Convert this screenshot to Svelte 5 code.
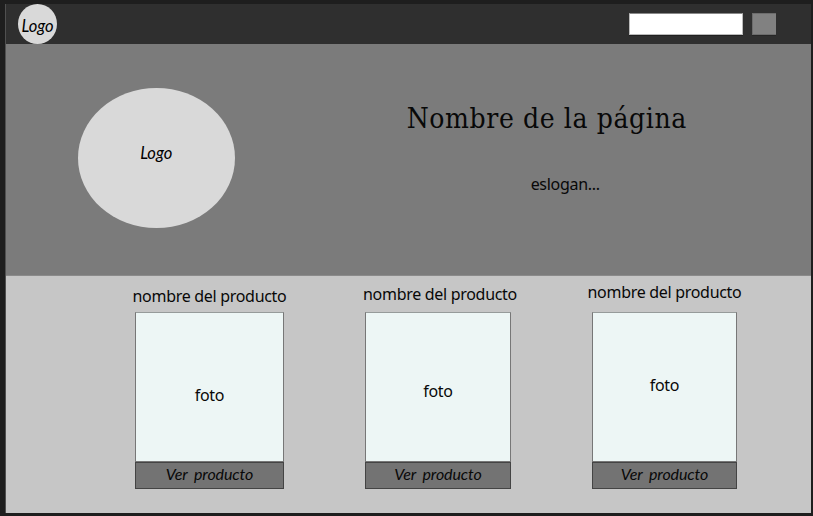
<script>
  const products = [
    { column: 1, width: 149, nameTop: 9, photoTop: 71 },
    { column: 2, width: 146, nameTop: 7, photoTop: 67 },
    { column: 3, width: 145, nameTop: 5, photoTop: 61 },
  ];
</script>

<div class="canvas">
  <div class="page">
    <header>
      <div class="badge"><span>Logo</span></div>
      <input type="text" aria-label="Buscar" />
      <button class="search" aria-label="Buscar"></button>
    </header>

    <section class="hero">
      <div class="logo"><span>Logo</span></div>
      <div class="intro">
        <h1>Nombre de la página</h1>
        <p>eslogan...</p>
      </div>
    </section>

    <main>
      {#each products as product (product.column)}
        <article style="width: {product.width}px">
          <h2 style="padding-top: {product.nameTop}px">nombre del producto</h2>
          <div class="photo" style="padding-top: {product.photoTop}px">foto</div>
          <button class="view"><span>Ver producto</span></button>
        </article>
      {/each}
    </main>
  </div>
</div>

<style>
  :global(body) {
    margin: 0;
    background: #1e1e1e;
  }

  .canvas {
    box-sizing: border-box;
    width: 813px;
    height: 516px;
    padding: 4px 2px 3px 5px;
    overflow: hidden;
    background: #1e1e1e;
    color: #080808;
    font: 16px/22px "Noto Sans", sans-serif;
    letter-spacing: -0.3px;
  }

  .page {
    box-sizing: border-box;
    height: 509px;
    border-left: 1px solid #505050;
    background: #c6c6c6;
  }

  header {
    display: flex;
    box-sizing: border-box;
    height: 40px;
    padding-left: 12px;
    background: #2f2f2f;
  }

  .badge,
  .logo {
    box-sizing: border-box;
    border-radius: 50%;
    background: #d9d9d9;
    text-align: center;
    font-family: Lato, sans-serif;
    font-style: italic;
    font-size: 16.5px;
    letter-spacing: 0;
    color: #000;
  }

  .badge {
    width: 39px;
    height: 40px;
    padding-top: 11px;
  }

  input {
    box-sizing: border-box;
    width: 114px;
    height: 22px;
    margin: 9px 0 0 572px;
    padding: 0;
    border: 1px solid #bbb;
    border-top-color: #888;
    border-radius: 0;
    background: #fff;
    box-shadow: 0 1px #202020;
  }

  .search {
    width: 24px;
    height: 22px;
    margin: 9px 0 0 9px;
    padding: 0;
    border: 1px solid #6c6c6c;
    border-right: 0;
    background: #818181;
    box-shadow: 0 1px #262626;
  }

  .hero {
    display: flex;
    height: 231px;
    background: #7b7b7b;
    border-bottom: 1px solid #8a8a8a;
  }

  .logo {
    flex: none;
    width: 157px;
    height: 140px;
    margin: 44.4px 0 0 71.7px;
    padding-top: 53.6px;
  }

  .intro {
    margin-left: 172px;
  }

  h1 {
    margin: 57px 0 0;
    font: 28px/36px "DejaVu Serif Condensed", "DejaVu Serif", serif;
    font-stretch: condensed;
    letter-spacing: 0.6px;
    white-space: nowrap;
  }

  .intro p {
    width: 317px;
    margin: 36px 0 0;
    text-align: center;
  }

  main {
    display: flex;
    padding-left: 129px;
  }

  article + article {
    margin-left: 81px;
  }

  h2 {
    box-sizing: border-box;
    height: 36px;
    margin: 0 -10px;
    font: inherit;
    text-align: center;
    white-space: nowrap;
  }

  article:nth-child(2) h2 {
    margin: 0 -12px 0 -8px;
  }

  .photo {
    box-sizing: border-box;
    height: 150px;
    border: 1px solid #777;
    border-top-color: #969b9a;
    background: #edf6f5;
    text-align: center;
  }

  .view {
    display: block;
    box-sizing: border-box;
    width: 100%;
    height: 27px;
    padding: 0 0 3px;
    border: 1px solid #444;
    border-radius: 0;
    background: #737373;
    color: #080808;
    font: italic 16px/20px Lato, sans-serif;
    letter-spacing: -0.1px;
    word-spacing: 3px;
  }
</style>
